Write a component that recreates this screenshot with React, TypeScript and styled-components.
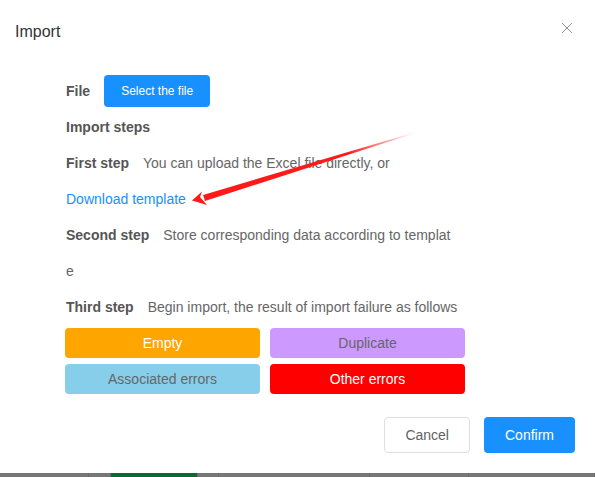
import styled, { createGlobalStyle } from "styled-components";

const GlobalStyle = createGlobalStyle`
  html, body {
    margin: 0;
    padding: 0;
    background: #fff;
  }
  body {
    font-family: "Liberation Sans", Arial, sans-serif;
    overflow: hidden;
  }
  * {
    box-sizing: border-box;
  }
`;

const Page = styled.div`
  width: 595px;
  height: 477px;
  position: relative;
  overflow: hidden;
`;

const Modal = styled.div`
  background: #fff;
  height: 473px;
  display: flex;
  flex-direction: column;
`;

const ModalHeader = styled.div`
  display: flex;
  justify-content: space-between;
  align-items: flex-start;
  padding: 21px 22px 0 15px;
  h4 {
    margin: 0;
    font-size: 16px;
    line-height: 22px;
    font-weight: normal;
    color: #333;
  }
  button {
    border: none;
    background: none;
    padding: 0;
    margin-top: 1px;
    width: 12px;
    height: 12px;
    cursor: pointer;
    display: flex;
  }
`;

const ModalBody = styled.div`
  padding: 30px 0 0 66px;
  width: 466px;
  font-size: 14px;
  color: #666;
`;

const Row = styled.div`
  display: flex;
  align-items: center;
  min-height: 36px;
  line-height: 36px;
`;

const Label = styled.span`
  font-weight: bold;
  color: #555;
  margin-right: 14px;
`;

const Paragraph = styled.div`
  line-height: 36px;
`;

const PrimaryButton = styled.button<{ $small?: boolean }>`
  cursor: pointer;
  border: none;
  border-radius: 4px;
  background: #1890ff;
  color: #fff;
  font-family: inherit;
  font-size: ${(p) => (p.$small ? "12px" : "14px")};
  height: ${(p) => (p.$small ? "32px" : "36px")};
  padding: ${(p) => (p.$small ? "0 17px" : "0 21px")};
`;

const DefaultButton = styled.button`
  cursor: pointer;
  border: 1px solid #dcdfe6;
  border-radius: 4px;
  background: #fff;
  color: #606266;
  font-family: inherit;
  font-size: 14px;
  height: 36px;
  padding: 0 20px;
`;

const Link = styled.a`
  color: #1890ff;
  text-decoration: none;
  cursor: pointer;
`;

const Legend = styled.div`
  display: grid;
  grid-template-columns: 195px 195px;
  column-gap: 10px;
  row-gap: 6px;
  margin-top: 3px;
  margin-left: -1px;
`;

const LegendItem = styled.div<{ $bg: string; $fg: string }>`
  height: 30px;
  border-radius: 4px;
  background: ${(p) => p.$bg};
  color: ${(p) => p.$fg};
  display: flex;
  align-items: center;
  justify-content: center;
  font-size: 14px;
`;

const Footer = styled.div`
  margin-top: auto;
  display: flex;
  justify-content: flex-end;
  gap: 14px;
  padding: 0 20px 20px 0;
`;

const Taskbar = styled.div`
  height: 4px;
  background: #777;
  display: grid;
  grid-template-columns: 89px 22px 87px 21px 151px 99px 1fr;
  > div {
    border-right: 1px solid #6a6a6a;
  }
`;

const TaskCell = styled.div<{ $active?: boolean }>`
  background: ${(p) => (p.$active ? "#0e6a34" : "transparent")};
`;

const ArrowLayer = styled.svg`
  position: absolute;
  left: 0;
  top: 0;
  pointer-events: none;
`;

const legend = [
  { text: "Empty", bg: "#ffa500", fg: "#fff" },
  { text: "Duplicate", bg: "#cc99ff", fg: "#666" },
  { text: "Associated errors", bg: "#87ceeb", fg: "#666" },
  { text: "Other errors", bg: "#ff0000", fg: "#fff" },
];

export default function App() {
  return (
    <Page>
      <GlobalStyle />
      <Modal>
        <ModalHeader>
          <h4>Import</h4>
          <button type="button" aria-label="close">
            <svg width="12" height="12" viewBox="0 0 12 12">
              <path d="M1 1L11 11M11 1L1 11" stroke="#909399" strokeWidth="1" />
            </svg>
          </button>
        </ModalHeader>
        <ModalBody>
          <Row>
            <Label>File</Label>
            <PrimaryButton $small type="button">
              Select the file
            </PrimaryButton>
          </Row>
          <Row>
            <Label>Import steps</Label>
          </Row>
          <Paragraph>
            <Label>First step</Label>You can upload the Excel file directly, or
          </Paragraph>
          <Paragraph>
            <Link>Download template</Link>
          </Paragraph>
          <Paragraph>
            <Label>Second step</Label>Store corresponding data according to templat
            <br />e
          </Paragraph>
          <Paragraph>
            <Label>Third step</Label>Begin import, the result of import failure as follows
          </Paragraph>
          <Legend>
            {legend.map((l) => (
              <LegendItem key={l.text} $bg={l.bg} $fg={l.fg}>
                {l.text}
              </LegendItem>
            ))}
          </Legend>
        </ModalBody>
        <Footer>
          <DefaultButton type="button">Cancel</DefaultButton>
          <PrimaryButton type="button">Confirm</PrimaryButton>
        </Footer>
      </Modal>
      <Taskbar>
        <TaskCell />
        <TaskCell />
        <TaskCell $active />
        <TaskCell />
        <TaskCell />
        <TaskCell />
        <TaskCell />
      </Taskbar>
      <ArrowLayer width="595" height="477" viewBox="0 0 595 477">
        <defs>
          <linearGradient id="shaft" x1="193" y1="200" x2="414" y2="133" gradientUnits="userSpaceOnUse">
            <stop offset="0" stopColor="#ff1a1a" />
            <stop offset="0.7" stopColor="#ff1a1a" />
            <stop offset="1" stopColor="#ff1a1a" stopOpacity="0" />
          </linearGradient>
        </defs>
        <polygon points="203,195 414,132.4 414,133.6 205,201" fill="url(#shaft)" />
        <polygon points="192,200.5 202,191.5 200,197 207,205" fill="#ff1a1a" />
      </ArrowLayer>
    </Page>
  );
}
